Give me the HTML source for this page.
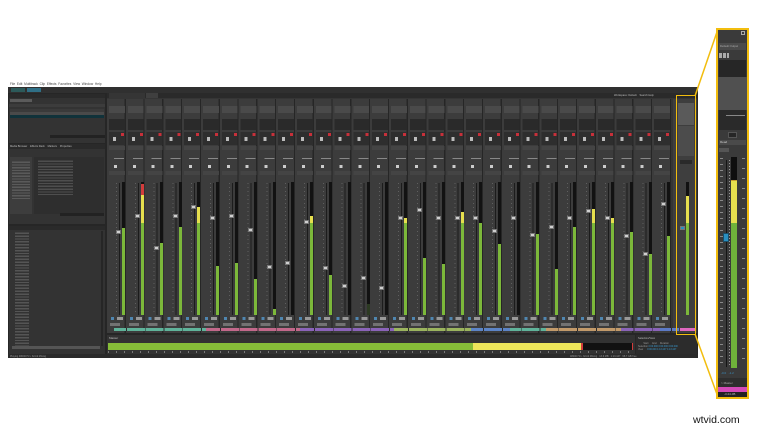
<!DOCTYPE html>
<html><head><meta charset="utf-8"><style>
*{margin:0;padding:0;box-sizing:border-box}
body{width:764px;height:430px;background:#fff;position:relative;overflow:hidden;font-family:"Liberation Sans",sans-serif}
.a{position:absolute}
.t{font-size:3px;color:#bbb;white-space:nowrap;line-height:3px}
.m{position:absolute;top:182px;width:3px;height:133px;background:#121212}
.h{position:absolute;width:5px;height:4px;background:#cfcfcf;border:1px solid #777}
</style></head><body>
<div class="a t" style="left:10px;top:83px;color:#444;font-size:3.2px">File&nbsp; Edit&nbsp; Multitrack&nbsp; Clip&nbsp; Effects&nbsp; Favorites&nbsp; View&nbsp; Window&nbsp; Help</div>
<div class="a" style="left:8px;top:87px;width:690px;height:271px;background:#262626"></div>
<div class="a" style="left:8px;top:87px;width:690px;height:6px;background:#303030"></div>
<div class="a" style="left:11px;top:88px;width:14px;height:4px;background:#2c5a5a"></div>
<div class="a" style="left:27px;top:88px;width:14px;height:4px;background:#2f6f86"></div>
<div class="a" style="left:9px;top:94px;width:96px;height:49px;background:#333"></div>
<div class="a" style="left:9px;top:94px;width:96px;height:4px;background:#2a2a2a"></div>
<div class="a" style="left:10px;top:99px;width:22px;height:3px;background:#777;opacity:.6"></div>
<div class="a" style="left:9px;top:104px;width:96px;height:3px;background:#3c3c3c"></div>
<div class="a" style="left:10px;top:109px;width:94px;height:3px;background:#3a3a3a"></div>
<div class="a" style="left:10px;top:112px;width:94px;height:3px;background:#4a4a4a"></div>
<div class="a" style="left:10px;top:115px;width:94px;height:3px;background:#10323a"></div>
<div class="a" style="left:50px;top:135px;width:55px;height:3px;background:#222"></div>
<div class="a" style="left:9px;top:144px;width:96px;height:80px;background:#333"></div>
<div class="a" style="left:9px;top:144px;width:96px;height:5px;background:#2a2a2a"></div>
<div class="a t" style="left:10px;top:145px;font-size:2.6px">Media Browser &nbsp;&nbsp; Effects Rack &nbsp;&nbsp; Markers &nbsp;&nbsp; Properties</div>
<div class="a" style="left:10px;top:157px;width:22px;height:57px;background:#3d3d3d"></div>
<div class="a" style="left:12px;top:160px;width:18px;height:40px;background:repeating-linear-gradient(#3d3d3d 0 1.5px,#5a5a5a 1.5px 2.8px)"></div>
<div class="a" style="left:34px;top:157px;width:70px;height:57px;background:#2e2e2e"></div>
<div class="a" style="left:38px;top:159px;width:35px;height:36px;background:repeating-linear-gradient(#2e2e2e 0 1.5px,#4e4e4e 1.5px 2.8px)"></div>
<div class="a" style="left:60px;top:213px;width:44px;height:3px;background:#222"></div>
<div class="a" style="left:9px;top:226px;width:96px;height:128px;background:#333"></div>
<div class="a" style="left:9px;top:226px;width:96px;height:4px;background:#2a2a2a"></div>
<div class="a" style="left:15px;top:231px;width:14px;height:115px;background:repeating-linear-gradient(#333 0 1.5px,#555 1.5px 2.9px)"></div>
<div class="a" style="left:101px;top:231px;width:2px;height:115px;background:#262626"></div>
<div class="a" style="left:12px;top:346px;width:88px;height:3px;background:#555"></div>
<div class="a" style="left:107px;top:93px;width:590px;height:240px;background:#353535"></div>
<div class="a" style="left:107px;top:93px;width:590px;height:5px;background:#2a2a2a"></div>
<div class="a" style="left:109px;top:93px;width:36px;height:5px;background:#353535"></div>
<div class="a" style="left:146px;top:93px;width:12px;height:5px;background:#3f3f3f"></div>
<div class="a t" style="left:614px;top:94px;font-size:2.6px">Workspace: Default &nbsp;&nbsp; Search Help</div>
<div class="a" style="left:107px;top:99px;width:564px;height:234px;background:repeating-linear-gradient(90deg,#3c3c3c 0 17.6px,#262626 17.6px 18.8px)"></div>
<div class="a" style="left:108px;top:106px;width:564px;height:7px;background:repeating-linear-gradient(90deg,transparent 0 1px,#4a4a4a 1px 16.8px,transparent 16.8px 18.8px)"></div>
<div class="a" style="left:108px;top:119px;width:564px;height:11px;background:repeating-linear-gradient(90deg,transparent 0 1px,#2a2a2a 1px 16.8px,transparent 16.8px 18.8px)"></div>
<div class="a" style="left:108px;top:132px;width:564px;height:13px;background:repeating-linear-gradient(90deg,transparent 0 1px,#2e2e2e 1px 16.8px,transparent 16.8px 18.8px)"></div>
<div class="a" style="left:108px;top:133px;width:564px;height:3px;background:repeating-linear-gradient(90deg,transparent 0 13px,#c8303a 13px 16px,transparent 16px 18.8px)"></div>
<div class="a" style="left:108px;top:137px;width:564px;height:4px;background:repeating-linear-gradient(90deg,transparent 0 5px,#bbb 5px 8px,transparent 8px 18.8px)"></div>
<div class="a" style="left:108px;top:146px;width:564px;height:4px;background:repeating-linear-gradient(90deg,transparent 0 1px,#444 1px 16.8px,transparent 16.8px 18.8px)"></div>
<div class="a" style="left:108px;top:158px;width:564px;height:1px;background:repeating-linear-gradient(90deg,transparent 0 6px,#888 6px 16px,transparent 16px 18.8px)"></div>
<div class="a" style="left:108px;top:165px;width:564px;height:3px;background:repeating-linear-gradient(90deg,transparent 0 6px,#ccc 6px 9px,transparent 9px 18.8px)"></div>
<div class="a" style="left:108px;top:171px;width:564px;height:4px;background:repeating-linear-gradient(90deg,transparent 0 1px,#444 1px 16.8px,transparent 16.8px 18.8px)"></div>
<div class="a" style="left:108px;top:183px;width:564px;height:132px;background:repeating-linear-gradient(90deg,transparent 0 8px,rgba(160,160,160,.35) 8px 9px,transparent 9px 18.8px);-webkit-mask:repeating-linear-gradient(#000 0 1px,transparent 1px 4px)"></div>
<div class="a" style="left:108px;top:183px;width:564px;height:132px;background:repeating-linear-gradient(90deg,transparent 0 11px,#1c1c1c 11px 12px,transparent 12px 18.8px)"></div>
<div class="a" style="left:673px;top:99px;width:24px;height:234px;background:#3e3e3e"></div>
<div class="a" style="left:678px;top:103px;width:16px;height:22px;background:#5a5a5a"></div>
<div class="a" style="left:678px;top:126px;width:16px;height:30px;background:#4c4c4c"></div>
<div class="a" style="left:680px;top:160px;width:12px;height:4px;background:#2a2a2a"></div>
<div class="m" style="left:686px;background:linear-gradient(#111 0 14px,#e6df4e 14px 41px,#7cb83a 41px)"></div>
<div class="h" style="left:680px;top:226px;background:#2a8fc0"></div>
<div class="m" style="left:122.2px;background:linear-gradient(#121212 0 46px,#7cb83a 46px)"></div>
<div class="m" style="left:141px;background:linear-gradient(#121212 0 2px,#d23c3c 2px 13px,#e6df4e 13px 41px,#7cb83a 41px)"></div>
<div class="m" style="left:159.8px;background:linear-gradient(#121212 0 61px,#7cb83a 61px)"></div>
<div class="m" style="left:178.6px;background:linear-gradient(#121212 0 45px,#7cb83a 45px)"></div>
<div class="m" style="left:197.4px;background:linear-gradient(#121212 0 25px,#e6df4e 25px 41px,#7cb83a 41px)"></div>
<div class="m" style="left:216.2px;background:linear-gradient(#121212 0 84px,#7cb83a 84px)"></div>
<div class="m" style="left:235px;background:linear-gradient(#121212 0 81px,#7cb83a 81px)"></div>
<div class="m" style="left:253.8px;background:linear-gradient(#121212 0 97px,#7cb83a 97px)"></div>
<div class="m" style="left:272.6px;background:linear-gradient(#121212 0 127px,#7cb83a 127px)"></div>
<div class="m" style="left:291.4px"></div>
<div class="m" style="left:310.2px;background:linear-gradient(#121212 0 34px,#e6df4e 34px 41px,#7cb83a 41px)"></div>
<div class="m" style="left:329px;background:linear-gradient(#121212 0 93px,#7cb83a 93px)"></div>
<div class="m" style="left:347.8px"></div>
<div class="m" style="left:366.6px;background:linear-gradient(#121212 0 122px,#2c3a22 122px)"></div>
<div class="m" style="left:385.4px"></div>
<div class="m" style="left:404.2px;background:linear-gradient(#121212 0 36px,#e6df4e 36px 41px,#7cb83a 41px)"></div>
<div class="m" style="left:423px;background:linear-gradient(#121212 0 76px,#7cb83a 76px)"></div>
<div class="m" style="left:441.8px;background:linear-gradient(#121212 0 82px,#7cb83a 82px)"></div>
<div class="m" style="left:460.6px;background:linear-gradient(#121212 0 30px,#e6df4e 30px 41px,#7cb83a 41px)"></div>
<div class="m" style="left:479.4px;background:linear-gradient(#121212 0 41px,#7cb83a 41px)"></div>
<div class="m" style="left:498.2px;background:linear-gradient(#121212 0 62px,#7cb83a 62px)"></div>
<div class="m" style="left:517px"></div>
<div class="m" style="left:535.8px;background:linear-gradient(#121212 0 52px,#7cb83a 52px)"></div>
<div class="m" style="left:554.6px;background:linear-gradient(#121212 0 87px,#7cb83a 87px)"></div>
<div class="m" style="left:573.4px;background:linear-gradient(#121212 0 45px,#7cb83a 45px)"></div>
<div class="m" style="left:592.2px;background:linear-gradient(#121212 0 27px,#e6df4e 27px 41px,#7cb83a 41px)"></div>
<div class="m" style="left:611px;background:linear-gradient(#121212 0 36px,#e6df4e 36px 41px,#7cb83a 41px)"></div>
<div class="m" style="left:629.8px;background:linear-gradient(#121212 0 50px,#7cb83a 50px)"></div>
<div class="m" style="left:648.6px;background:linear-gradient(#121212 0 72px,#7cb83a 72px)"></div>
<div class="m" style="left:667.4px;background:linear-gradient(#121212 0 54px,#7cb83a 54px)"></div>
<div class="h" style="left:116px;top:230px"></div><div class="h" style="left:135px;top:214px"></div><div class="h" style="left:154px;top:246px"></div><div class="h" style="left:173px;top:214px"></div><div class="h" style="left:191px;top:205px"></div><div class="h" style="left:210px;top:216px"></div><div class="h" style="left:229px;top:214px"></div><div class="h" style="left:248px;top:228px"></div><div class="h" style="left:267px;top:265px"></div><div class="h" style="left:285px;top:261px"></div><div class="h" style="left:304px;top:220px"></div><div class="h" style="left:323px;top:266px"></div><div class="h" style="left:342px;top:284px"></div><div class="h" style="left:361px;top:276px"></div><div class="h" style="left:379px;top:286px"></div><div class="h" style="left:398px;top:216px"></div><div class="h" style="left:417px;top:208px"></div><div class="h" style="left:436px;top:216px"></div><div class="h" style="left:455px;top:216px"></div><div class="h" style="left:473px;top:216px"></div><div class="h" style="left:492px;top:229px"></div><div class="h" style="left:511px;top:216px"></div><div class="h" style="left:530px;top:233px"></div><div class="h" style="left:549px;top:225px"></div><div class="h" style="left:567px;top:216px"></div><div class="h" style="left:586px;top:209px"></div><div class="h" style="left:605px;top:216px"></div><div class="h" style="left:624px;top:234px"></div><div class="h" style="left:643px;top:252px"></div><div class="h" style="left:661px;top:202px"></div>
<div class="a" style="left:108px;top:317px;width:564px;height:3px;background:repeating-linear-gradient(90deg,transparent 0 3px,#4f86b0 3px 6px,transparent 6px 9px,#999 9px 15px,transparent 15px 18.8px)"></div>
<div class="a" style="left:108px;top:323px;width:564px;height:3px;background:repeating-linear-gradient(90deg,transparent 0 2px,#8a8a8a 2px 12px,transparent 12px 18.8px);opacity:.7"></div>
<div class="a" style="left:114px;top:328px;width:92px;height:3px;background:#5fb39a"></div>
<div class="a" style="left:206px;top:328px;width:94px;height:3px;background:#c2688a"></div>
<div class="a" style="left:300px;top:328px;width:94px;height:3px;background:#8a63b8"></div>
<div class="a" style="left:394px;top:328px;width:77px;height:3px;background:#9bb45e"></div>
<div class="a" style="left:471px;top:328px;width:39px;height:3px;background:#5c84c6"></div>
<div class="a" style="left:510px;top:328px;width:36px;height:3px;background:#5fb39a"></div>
<div class="a" style="left:546px;top:328px;width:75px;height:3px;background:#c29a6a"></div>
<div class="a" style="left:621px;top:328px;width:39px;height:3px;background:#8a63b8"></div>
<div class="a" style="left:660px;top:328px;width:19px;height:3px;background:#5c7ac6"></div>
<div class="a" style="left:680px;top:328px;width:15px;height:3px;background:#e068c0"></div>
<div class="a" style="left:108px;top:328px;width:564px;height:3px;background:repeating-linear-gradient(90deg,transparent 0 18px,#2a2a2a 18px 18.8px)"></div>
<div class="a" style="left:107px;top:335px;width:528px;height:19px;background:#323232"></div>
<div class="a t" style="left:109px;top:337px">Master</div>
<div class="a" style="left:108px;top:343px;width:365px;height:7px;background:#86bd38"></div>
<div class="a" style="left:473px;top:343px;width:108px;height:7px;background:#ede65a"></div>
<div class="a" style="left:581px;top:343px;width:2px;height:7px;background:#d23c3c"></div>
<div class="a" style="left:583px;top:343px;width:50px;height:7px;background:#111"></div>
<div class="a" style="left:632px;top:343px;width:1px;height:7px;background:#d23c3c"></div>
<div class="a" style="left:108px;top:351px;width:525px;height:2px;background:repeating-linear-gradient(90deg,#777 0 1px,transparent 1px 8px)"></div>
<div class="a" style="left:636px;top:335px;width:61px;height:19px;background:#2c2c2c"></div>
<div class="a t" style="left:638px;top:337px;font-size:2.6px">Selection/View</div>
<div class="a t" style="left:638px;top:342px;font-size:2.4px;line-height:3.2px;color:#999">&nbsp;&nbsp;&nbsp;&nbsp;&nbsp;&nbsp;&nbsp;&nbsp;Start &nbsp;&nbsp;&nbsp;&nbsp; End &nbsp;&nbsp;&nbsp; Duration<br>Selection <span style="color:#3a9ad0">0:00.000 0:00.000 0:00.000</span><br>View &nbsp;&nbsp;&nbsp;&nbsp; <span style="color:#3a9ad0">0:00.000 1:13.447 1:13.447</span></div>
<div class="a" style="left:8px;top:354px;width:690px;height:4px;background:#2a2a2a"></div>
<div class="a t" style="left:10px;top:354.5px;font-size:2.5px;color:#999">Playing 48000 Hz • 32-bit Mixing</div>
<div class="a t" style="left:570px;top:354.5px;font-size:2.5px;color:#999">48000 Hz • 32-bit Mixing &nbsp; 13.6 MB &nbsp; 1:13.447 &nbsp; 98.7 GB free</div>
<div class="a" style="left:676px;top:95px;width:20px;height:240px;border:1.5px solid #f2bd0e"></div>
<svg class="a" style="left:0;top:0" width="764" height="430"><line x1="695" y1="96" x2="718" y2="29" stroke="#f2bd0e" stroke-width="1.5"/><line x1="695" y1="334" x2="718" y2="397" stroke="#f2bd0e" stroke-width="1.5"/></svg>
<div class="a" style="left:716px;top:28px;width:33px;height:371px;background:#f2bd0e"></div>
<div class="a" style="left:718px;top:30px;width:29px;height:367px;background:#3a3a3a"></div>
<div class="a" style="left:741px;top:31px;width:4px;height:4px;border:1px solid #aaa"></div>
<div class="a" style="left:719px;top:43px;width:27px;height:7px;background:#4a4a4a"></div>
<div class="a t" style="left:720px;top:45px;font-size:2.8px;color:#aaa">Default Output</div>
<div class="a" style="left:719px;top:53px;width:10px;height:5px;background:repeating-linear-gradient(90deg,#aaa 0 3px,transparent 3px 4px)"></div>
<div class="a" style="left:719px;top:60px;width:27px;height:17px;background:#262626"></div>
<div class="a" style="left:718px;top:77px;width:29px;height:33px;background:#505050"></div>
<div class="a" style="left:719px;top:110px;width:27px;height:20px;background:#2a2a2a"></div>
<div class="a" style="left:726px;top:115px;width:19px;height:1px;background:#888"></div>
<div class="a" style="left:728px;top:132px;width:9px;height:6px;background:#262626;border:1px solid #555"></div>
<div class="a" style="left:719px;top:140px;width:27px;height:5px;background:#4a4a4a"></div>
<div class="a t" style="left:720px;top:141px;color:#ccc">Read</div>
<div class="a" style="left:719px;top:148px;width:10px;height:4px;background:#555"></div>
<div class="a" style="left:720px;top:158px;width:3px;height:210px;background:repeating-linear-gradient(#888 0 1px,transparent 1px 6px)"></div>
<div class="a" style="left:742px;top:158px;width:3px;height:210px;background:repeating-linear-gradient(#888 0 1px,transparent 1px 10px)"></div>
<div class="a" style="left:726px;top:160px;width:1px;height:207px;background:#151515"></div>
<div class="a" style="left:729px;top:160px;width:1px;height:207px;background:repeating-linear-gradient(#999 0 1px,transparent 1px 3px)"></div>
<div class="a" style="left:731px;top:157px;width:6px;height:211px;background:linear-gradient(#0e0e0e 0 23px,#c9a02c 23px 24px,#e6df4e 24px 66px,#6fb23a 66px)"></div>
<div class="a" style="left:723px;top:233px;width:6px;height:9px;background:#2a8fc0;border:1px solid #1a4f6a"></div>
<div class="a t" style="left:721px;top:372px;color:#3a8fc0">-0.0 &nbsp; -1.2</div>
<div class="a" style="left:718px;top:378px;width:29px;height:9px;background:#2e2e2e"></div>
<div class="a t" style="left:721px;top:382px;color:#aaa">&gt; Master</div>
<div class="a" style="left:718px;top:387px;width:29px;height:5px;background:#d44ab8"></div>
<div class="a" style="left:718px;top:392px;width:29px;height:5px;background:#222"></div>
<div class="a t" style="left:724px;top:393px;color:#bbb">-3.24 dB</div>
<div class="a" style="left:693px;top:414px;font-size:10.5px;color:#111;line-height:12px">wtvid.com</div>
</body></html>
